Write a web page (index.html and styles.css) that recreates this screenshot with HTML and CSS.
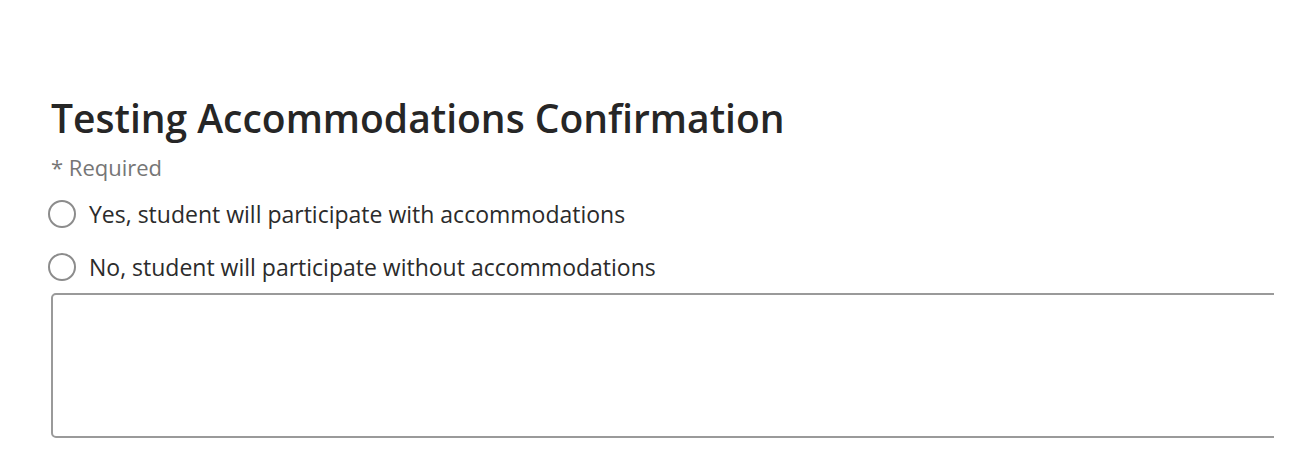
FILE: index.html
```html
<!DOCTYPE html>
<html lang="en">
<head>
    <meta charset="UTF-8">
    <meta name="viewport" content="width=device-width, initial-scale=1.0">
    <title>Testing Accommodations Confirmation</title>
    <link rel="stylesheet" href="styles.css">
</head>
<body>
    <div class="page">
        <div class="question">
            <h1 class="question-title">Testing Accommodations Confirmation</h1>
            <div class="required">* Required</div>
            <div class="choices">
                <label class="choice">
                    <input type="radio" name="accommodations" value="yes">
                    <span class="choice-label">Yes, student will participate with accommodations</span>
                </label>
                <label class="choice">
                    <input type="radio" name="accommodations" value="no">
                    <span class="choice-label">No, student will participate without accommodations</span>
                </label>
            </div>
            <textarea class="comments"></textarea>
        </div>
    </div>
</body>
</html>
```

FILE: styles.css
```css
body {
    font-family: "Open Sans", "Liberation Sans", sans-serif;
    margin: 0;
    padding: 0;
    background-color: #fff;
    color: #2b2b2b;
}

.page {
    width: 1274px;
    overflow: hidden;
    padding-top: 92px;
}

.question {
    padding-left: 51px;
}

.question-title {
    font-size: 39px;
    font-weight: 600;
    margin: 0;
    line-height: 52px;
    color: #262626;
}

.required {
    font-size: 22px;
    color: #767676;
    margin-top: 10px;
    line-height: 26px;
}

.choices {
    margin-top: 7px;
    margin-left: -3px;
}

.choice {
    display: flex;
    align-items: center;
    gap: 13px;
    height: 53px;
    cursor: pointer;
}

.choice input {
    appearance: none;
    width: 28px;
    height: 28px;
    margin: 0;
    border: 2px solid #8c8c8c;
    border-radius: 50%;
    box-sizing: border-box;
}

.choice-label {
    font-size: 23px;
    color: #2b2b2b;
}

.comments {
    display: block;
    width: 1300px;
    height: 145px;
    box-sizing: border-box;
    border: 2px solid #9a9a9a;
    border-radius: 5px;
    margin-top: 0;
    resize: none;
}
```
